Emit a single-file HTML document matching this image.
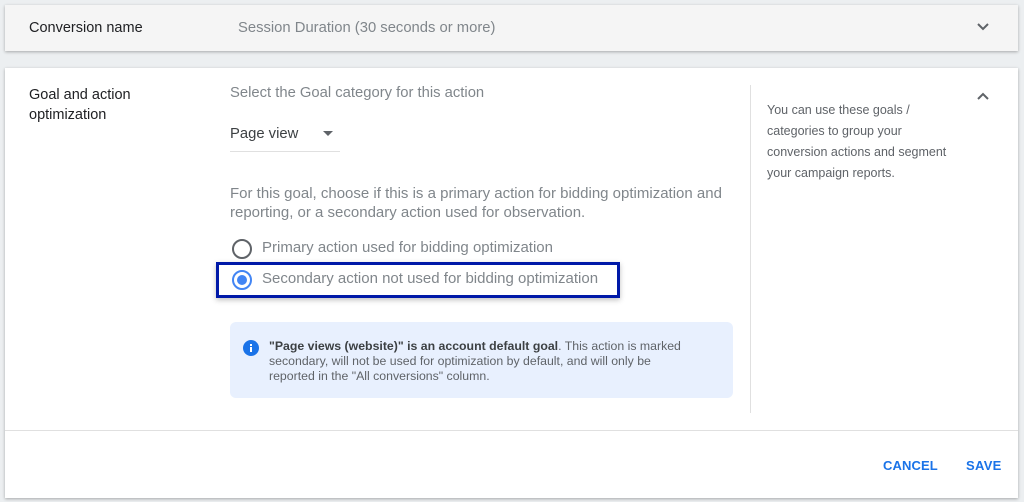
<!DOCTYPE html>
<html><head><style>
body{margin:0;width:1024px;height:502px;background:#eceff1;font-family:"Liberation Sans",sans-serif;position:relative;overflow:hidden}
.a{position:absolute;white-space:nowrap}
.card{position:absolute;background:#fff;box-shadow:0 1px 3px rgba(0,0,0,.3)}
.g{color:#80868b;font-size:14.8px}
</style></head><body>
<div class="card" style="left:5px;top:5px;width:1013px;height:46px;background:#f5f5f5"></div>
<div class="a" style="left:29px;top:20px;font-size:14.5px;color:#202124">Conversion name</div>
<div class="a g" style="left:238px;top:20px">Session Duration (30 seconds or more)</div>
<svg class="a" style="left:976px;top:22px" width="14" height="10"><path d="M2 2l5 5 5-5" stroke="#5f6368" stroke-width="2" fill="none"/></svg>

<div class="card" style="left:5px;top:68px;width:1013px;height:430px"></div>
<div class="a" style="left:29px;top:85px;font-size:14.5px;color:#202124;line-height:20px">Goal and action<br>optimization</div>
<div class="a g" style="left:230px;top:85px">Select the Goal category for this action</div>
<div class="a" style="left:230px;top:126px;font-size:14.8px;color:#3c4043">Page view</div>
<svg class="a" style="left:323px;top:131px" width="10" height="6"><path d="M0 0h10L5 5z" fill="#5f6368"/></svg>
<div class="a" style="left:230px;top:151px;width:110px;height:1px;background:#e0e0e0"></div>
<div class="a g" style="left:230px;top:184px;line-height:19px;font-size:15px">For this goal, choose if this is a primary action for bidding optimization and<br>reporting, or a secondary action used for observation.</div>
<svg class="a" style="left:231px;top:238px" width="22" height="22"><circle cx="11" cy="11" r="9" stroke="#5f6368" stroke-width="2" fill="none"/></svg>
<div class="a g" style="left:262px;top:239px;font-size:15px">Primary action used for bidding optimization</div>
<div class="a" style="left:216px;top:262px;width:404px;height:36px;border:3px solid #0019a8;box-sizing:border-box;box-shadow:0 2px 5px rgba(0,0,0,.25)"></div>
<svg class="a" style="left:231px;top:269px" width="22" height="22"><circle cx="11" cy="11" r="9" stroke="#4285f4" stroke-width="2" fill="none"/><circle cx="11" cy="11" r="5" fill="#4285f4"/></svg>
<div class="a g" style="left:262px;top:270px;font-size:15px">Secondary action not used for bidding optimization</div>
<div class="a" style="left:230px;top:322px;width:503px;height:76px;background:#e8f0fe;border-radius:6px"></div>
<svg class="a" style="left:243px;top:340px" width="16" height="16"><circle cx="8" cy="8" r="8" fill="#1a73e8"/><rect x="7" y="7" width="2" height="5" fill="#fff"/><rect x="7" y="4" width="2" height="2" fill="#fff"/></svg>
<div class="a" style="left:269px;top:339px;font-size:12.3px;line-height:15px;color:#5f6368"><b style="color:#3c4043">"Page views (website)" is an account default goal</b>. This action is marked<br>secondary, will not be used for optimization by default, and will only be<br>reported in the "All conversions" column.</div>
<div class="a" style="left:750px;top:85px;width:1px;height:328px;background:#e0e0e0"></div>
<div class="a" style="left:767px;top:100px;font-size:12.5px;line-height:21px;color:#5f6368">You can use these goals /<br>categories to group your<br>conversion actions and segment<br>your campaign reports.</div>
<svg class="a" style="left:976px;top:91px" width="14" height="10"><path d="M2 8l5-5 5 5" stroke="#5f6368" stroke-width="2" fill="none"/></svg>
<div class="a" style="left:5px;top:430px;width:1013px;height:1px;background:#e0e0e0"></div>
<div class="a" style="left:883px;top:458px;font-size:13px;font-weight:bold;color:#1a73e8;letter-spacing:.1px">CANCEL</div>
<div class="a" style="left:966px;top:458px;font-size:13px;font-weight:bold;color:#1a73e8;letter-spacing:.3px">SAVE</div>
</body></html>
